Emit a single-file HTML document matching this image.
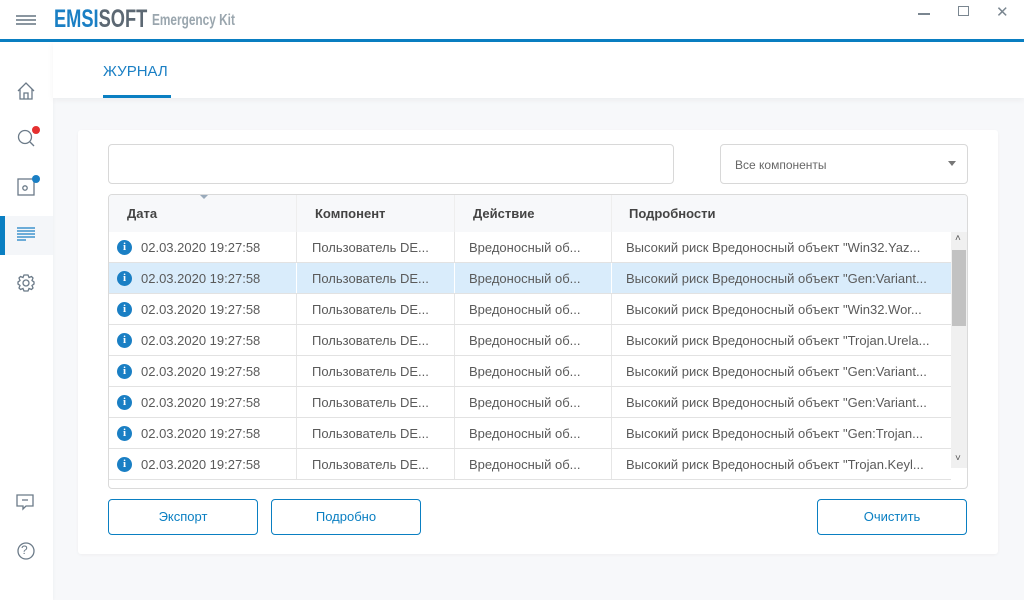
<!DOCTYPE html>
<html><head><meta charset="utf-8"><style>
*{box-sizing:border-box;margin:0;padding:0}
body{width:1024px;height:600px;overflow:hidden;background:#f7f8fa;font-family:"Liberation Sans",sans-serif;position:relative;color:#555}
.abs{position:absolute}
#title{left:0;top:0;width:1024px;height:39px;background:#fff}
#bl{left:0;top:39px;width:1024px;height:3px;background:#0a7fc2}
#side{left:0;top:42px;width:53px;height:558px;background:#fff;box-shadow:1px 0 3px rgba(0,0,0,.03)}
#tabh{left:53px;top:42px;width:971px;height:56px;background:#fff;box-shadow:0 2px 6px rgba(0,0,0,.05)}
#card{left:78px;top:130px;width:920px;height:424px;background:#fff;border-radius:3px;box-shadow:0 1px 3px rgba(0,0,0,.04)}
.inp{border:1px solid #d8d8d8;border-radius:4px;background:#fff}
.btn{border:1px solid #0a7fc2;border-radius:4px;background:#fff;color:#0a7fc2;font-size:13px;text-align:center;line-height:34px}
#tbl{left:108px;top:194px;width:860px;height:295px;border:1px solid #dadada;border-radius:4px;overflow:hidden;background:#fff}
.hdr{position:absolute;left:0;top:0;width:860px;height:37px;background:#f7f8fa;font-weight:bold;font-size:13px;color:#444}
.hdr span{position:absolute;top:11px}
.row{position:absolute;left:0;width:842px;height:31px;border-bottom:1px solid #e2e2e2;font-size:13px;color:#5a5a5a}
.row span{position:absolute;top:8px;white-space:nowrap}
.row.sel{background:#d9ecfb}
.vl{position:absolute;top:0;width:1px;height:100%;background:#e6e6e6}
.ic{position:absolute;left:8px;top:8px;width:15px;height:15px;border-radius:50%;background:#1a7fc4;color:#fff;font-size:11px;font-weight:bold;text-align:center;line-height:15px;font-family:"Liberation Serif",serif}
</style></head><body>
<div id="title" class="abs"></div>
<div class="abs" style="left:16px;top:15px;width:20px;height:2px;background:#8a96a0"></div>
<div class="abs" style="left:16px;top:19px;width:20px;height:2px;background:#8a96a0"></div>
<div class="abs" style="left:16px;top:23px;width:20px;height:2px;background:#8a96a0"></div>
<div class="abs" style="left:54px;top:5px;font-size:25px;font-weight:bold;white-space:nowrap;transform:scaleX(.73);transform-origin:left;color:#1a7fc4">EMSI<span style="color:#5c6873">SOFT</span></div>
<div class="abs" style="left:152px;top:12px;font-size:16px;font-weight:bold;white-space:nowrap;color:#9aa6ae;transform:scaleX(.74);transform-origin:left">Emergency Kit</div>
<div class="abs" style="left:918px;top:13px;width:12px;height:2px;background:#7a8690"></div>
<div class="abs" style="left:958px;top:6px;width:11px;height:10px;border:1.5px solid #7a8690"></div>
<div class="abs" style="left:996px;top:3px;font-size:15px;color:#7a8690">✕</div>
<div id="bl" class="abs"></div>
<div id="side" class="abs"></div>
<svg class="abs" style="left:0;top:42px" width="53" height="558" fill="none" stroke="#6b7a88" stroke-width="1.3">
<path d="M18 49 L26 41 L34 49 M20 47 V57 H32 V47 M24 57 V51 H28 V57"/>
<circle cx="25" cy="95" r="6.5"/><path d="M30 100 L34 104"/>
<rect x="18" y="137" width="16" height="16"/><circle cx="25" cy="146" r="2.2"/>
<rect x="0" y="174" width="53" height="39" fill="#f4f6f9" stroke="none"/>
<rect x="0" y="174" width="5" height="39" fill="#0a7fc2" stroke="none"/>
<path d="M17 186 H35 M17 189 H35 M17 192 H35 M17 195 H35 M17 198 H26" stroke="#1a7fc4"/>
<circle cx="26" cy="241" r="3"/><path d="M26 233 L28 233 L29 235.5 L31.5 234.5 L33 236 L32 238.5 L34 240 L34 242 L32 243.5 L33 246 L31.5 247.5 L29 246.5 L28 249 L24 249 L23 246.5 L20.5 247.5 L19 246 L20 243.5 L18 242 L18 240 L20 238.5 L19 236 L20.5 234.5 L23 235.5 L24 233 Z"/>
<path d="M17 453 H33 V464 H26 L23 467 V464 H17 Z"/>
<path d="M22 458 H28" />
<circle cx="26" cy="509" r="8"/>
</svg>
<div class="abs" style="left:21px;top:543px;font-size:12px;color:#6b7a88">?</div>
<div class="abs" style="left:32px;top:126px;width:8px;height:8px;border-radius:50%;background:#e53030"></div>
<div class="abs" style="left:32px;top:175px;width:8px;height:8px;border-radius:50%;background:#1a7fc4"></div>
<div id="tabh" class="abs"></div>
<div class="abs" style="left:103px;top:63px;font-size:15px;color:#1a7fc4">ЖУРНАЛ</div>
<div class="abs" style="left:103px;top:95px;width:68px;height:3px;background:#0a7fc2"></div>
<div id="card" class="abs"></div>
<div class="abs inp" style="left:108px;top:144px;width:566px;height:40px"></div>
<div class="abs inp" style="left:720px;top:144px;width:248px;height:40px;font-size:12px;color:#666;padding:13px 0 0 14px">Все компоненты<span style="position:absolute;right:11px;top:16px;border:4px solid transparent;border-top:5px solid #777"></span></div>
<div id="tbl" class="abs">
<div class="hdr"><span style="left:18px">Дата</span><span style="left:206px">Компонент</span><span style="left:364px">Действие</span><span style="left:520px">Подробности</span>
<div class="vl" style="left:187px;background:#eee"></div><div class="vl" style="left:345px;background:#eee"></div><div class="vl" style="left:502px;background:#eee"></div></div>
<div style="position:absolute;left:91px;top:0;border:4px solid transparent;border-top:4px solid #9ab"></div>
<div class="row" style="top:37px"><div class="ic">i</div><span style="left:32px">02.03.2020 19:27:58</span><div class="vl" style="left:187px"></div><span style="left:203px">Пользователь DE...</span><div class="vl" style="left:345px"></div><span style="left:360px">Вредоносный об...</span><div class="vl" style="left:502px"></div><span style="left:517px">Высокий риск Вредоносный объект "Win32.Yaz...</span></div>
<div class="row sel" style="top:68px"><div class="ic">i</div><span style="left:32px">02.03.2020 19:27:58</span><div class="vl" style="left:187px;background:#fff"></div><span style="left:203px">Пользователь DE...</span><div class="vl" style="left:345px;background:#fff"></div><span style="left:360px">Вредоносный об...</span><div class="vl" style="left:502px;background:#fff"></div><span style="left:517px">Высокий риск Вредоносный объект "Gen:Variant...</span></div>
<div class="row" style="top:99px"><div class="ic">i</div><span style="left:32px">02.03.2020 19:27:58</span><div class="vl" style="left:187px"></div><span style="left:203px">Пользователь DE...</span><div class="vl" style="left:345px"></div><span style="left:360px">Вредоносный об...</span><div class="vl" style="left:502px"></div><span style="left:517px">Высокий риск Вредоносный объект "Win32.Wor...</span></div>
<div class="row" style="top:130px"><div class="ic">i</div><span style="left:32px">02.03.2020 19:27:58</span><div class="vl" style="left:187px"></div><span style="left:203px">Пользователь DE...</span><div class="vl" style="left:345px"></div><span style="left:360px">Вредоносный об...</span><div class="vl" style="left:502px"></div><span style="left:517px">Высокий риск Вредоносный объект "Trojan.Urela...</span></div>
<div class="row" style="top:161px"><div class="ic">i</div><span style="left:32px">02.03.2020 19:27:58</span><div class="vl" style="left:187px"></div><span style="left:203px">Пользователь DE...</span><div class="vl" style="left:345px"></div><span style="left:360px">Вредоносный об...</span><div class="vl" style="left:502px"></div><span style="left:517px">Высокий риск Вредоносный объект "Gen:Variant...</span></div>
<div class="row" style="top:192px"><div class="ic">i</div><span style="left:32px">02.03.2020 19:27:58</span><div class="vl" style="left:187px"></div><span style="left:203px">Пользователь DE...</span><div class="vl" style="left:345px"></div><span style="left:360px">Вредоносный об...</span><div class="vl" style="left:502px"></div><span style="left:517px">Высокий риск Вредоносный объект "Gen:Variant...</span></div>
<div class="row" style="top:223px"><div class="ic">i</div><span style="left:32px">02.03.2020 19:27:58</span><div class="vl" style="left:187px"></div><span style="left:203px">Пользователь DE...</span><div class="vl" style="left:345px"></div><span style="left:360px">Вредоносный об...</span><div class="vl" style="left:502px"></div><span style="left:517px">Высокий риск Вредоносный объект "Gen:Trojan...</span></div>
<div class="row" style="top:254px"><div class="ic">i</div><span style="left:32px">02.03.2020 19:27:58</span><div class="vl" style="left:187px"></div><span style="left:203px">Пользователь DE...</span><div class="vl" style="left:345px"></div><span style="left:360px">Вредоносный об...</span><div class="vl" style="left:502px"></div><span style="left:517px">Высокий риск Вредоносный объект "Trojan.Keyl...</span></div>
<div class="row" style="top:285px"><div class="ic">i</div></div>
<div style="position:absolute;left:842px;top:37px;width:16px;height:236px;background:#f0f0f0"></div>
<div style="position:absolute;left:843px;top:55px;width:14px;height:76px;background:#c2c2c2"></div>
<div style="position:absolute;left:846px;top:38px;font-size:10px;color:#555">˄</div>
<div style="position:absolute;left:846px;top:258px;font-size:10px;color:#555">˅</div>
</div>
<div class="abs btn" style="left:108px;top:499px;width:150px;height:36px">Экспорт</div>
<div class="abs btn" style="left:271px;top:499px;width:150px;height:36px">Подробно</div>
<div class="abs btn" style="left:817px;top:499px;width:150px;height:36px">Очистить</div>
</body></html>
